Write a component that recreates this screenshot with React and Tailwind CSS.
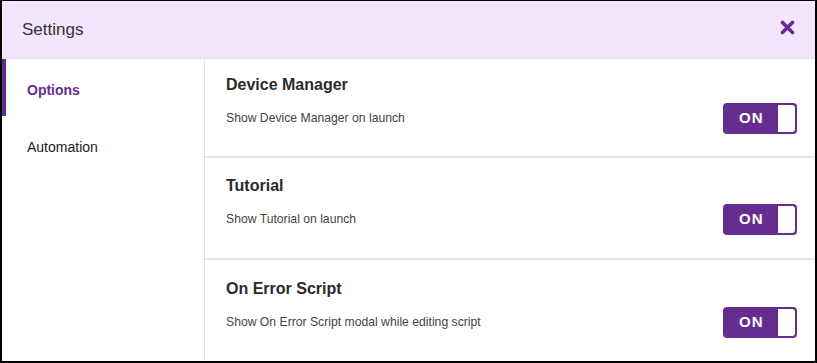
const sections = [
  { title: "Device Manager", text: "Show Device Manager on launch" },
  { title: "Tutorial", text: "Show Tutorial on launch" },
  { title: "On Error Script", text: "Show On Error Script modal while editing script" },
];

const Toggle = () => (
  <div className="flex h-[31px] w-[74px] items-center rounded-[4px] bg-[#662d91] pl-[16px] pr-[2px]">
    <span className="flex-1 text-[15px] font-bold tracking-[1px] text-white">ON</span>
    <span className="h-[27px] w-[17px] rounded-r-[3px] bg-white" />
  </div>
);

export default function App() {
  return (
    <div className="flex h-[363px] w-[817px] flex-col overflow-hidden border-t border-l-2 border-r-2 border-b-2 border-black bg-white font-['Liberation_Sans',Arial,sans-serif]">
      <div className="flex h-[58px] shrink-0 items-center justify-between border-b border-[#e2e2e2] bg-[#f3e5fd] pl-[20px] pr-[20px]">
        <h2 className="text-[17px] text-[#333]">Settings</h2>
        <svg width="15" height="15" viewBox="0 0 15 15" className="-translate-y-[2px]">
          <path d="M2.5 2.5L12.5 12.5M12.5 2.5L2.5 12.5" stroke="#662d91" strokeWidth="3.6" strokeLinecap="round" />
        </svg>
      </div>
      <div className="flex flex-1">
        <div className="w-[203px] shrink-0 border-r border-[#e2e2e2]">
          <div className="flex h-[57px] items-center border-l-4 border-[#662d91] pl-[21px] pt-[6px] text-[14px] font-bold text-[#662d91]">
            Options
          </div>
          <div className="flex h-[57px] items-center pl-[25px] pt-[6px] text-[14px] text-[#222]">Automation</div>
        </div>
        <div className="flex flex-1 flex-col">
          {sections.map((s, i) => (
            <div
              key={s.title}
              className={`flex shrink-0 flex-col pl-[21px] pr-[18px] ${
                i === 0 ? "h-[99px] pt-[17px]" : i === 1 ? "h-[102px] pt-[19px]" : "flex-1 pt-[20px]"
              } ${i < 2 ? "border-b-2 border-[#e6e6e6]" : ""}`}
            >
              <h3 className="text-[16px] font-bold leading-[18px] text-[#2b2b2b]">{s.title}</h3>
              <div className="mt-[9px] flex items-center justify-between">
                <p className="text-[12.2px] text-[#444]">{s.text}</p>
                <Toggle />
              </div>
            </div>
          ))}
        </div>
      </div>
    </div>
  );
}
